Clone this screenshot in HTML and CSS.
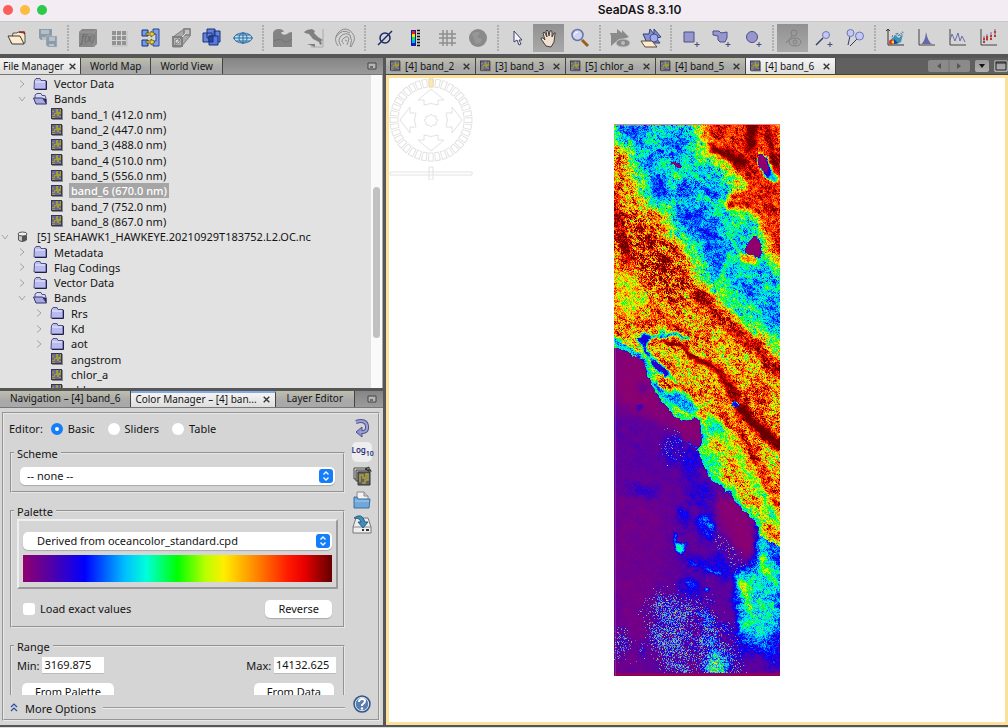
FILE: index.html
```html
<!DOCTYPE html>
<html lang="en">
<head>
<meta charset="utf-8">
<title>SeaDAS 8.3.10</title>
<link rel="stylesheet" href="styles.css">
</head>
<body>
<svg class="defs" width="0" height="0" aria-hidden="true">
  <symbol id="band" viewBox="0 0 12 12">
    <path d="M1 1h11v11H1z" fill="#8a8a84"/><path d="M0 0h11v11H0z" fill="#34345f"/><path d="M1 1h9v9H1z" fill="#6a6a92"/>
    <path d="M5 1h2v3h2V1h1v5H8v2H6V6H4v2H1V7h2V5h2zM1 9h3v1H1zM8 8h2v1H8zM1 3h2v1H1z" fill="#a29f2c"/>
  </symbol>
  <symbol id="folder" viewBox="0 0 14 12">
    <path d="M1.500 2.500L3 .5h4l1 2h5v8.500H1z" fill="#b9bbee" stroke="#515184"/><path d="M2 4h10" stroke="#eeeeff"/><path d="M13.500 3v8.500H2" fill="none" stroke="#20204d"/>
  </symbol>
  <symbol id="open" viewBox="0 0 14 12">
    <path d="M2 5V2l2-1.500h4l1 2h3l1 3v5" fill="#d7d8f4" stroke="#515184"/><path d="M.500 5h9l4 6H3z" fill="#a8abe1" stroke="#34346c"/><path d="M10 5l3.500 1v5z" fill="#24245a"/>
  </symbol>
  <symbol id="right" viewBox="0 0 8 10"><path d="M2 1.500L6 5 2 8.500" fill="none" stroke="#a4a4a4"/></symbol>
  <symbol id="down" viewBox="0 0 8 10"><path d="M1 3l3 4 3-4" fill="none" stroke="#a4a4a4"/></symbol>
  <symbol id="close" viewBox="0 0 8 8"><path d="M1.500 1.500l5 5m0-5l-5 5" stroke="#333" stroke-width="1.200"/></symbol>
  <symbol id="dock" viewBox="0 0 10 8"><path d="M1 1h8v6H1z" fill="#b5b5b5" stroke="#444"/><path d="M3 5h3" stroke="#222"/></symbol>
  <symbol id="step" viewBox="0 0 14 14"><rect width="14" height="14" rx="3" fill="#147dfa"/><path d="M4.500 5.500L7 3l2.500 2.500M4.500 8.500L7 11l2.500-2.500" fill="none" stroke="#fff" stroke-width="1.300"/></symbol>
</svg>

<header class="titlebar">
  <div class="lights"><i class="light red"></i><i class="light amber"></i><i class="light green"></i></div>
  <h1>SeaDAS 8.3.10</h1>
</header>

<div class="toolbar" role="toolbar" aria-label="Tools">
  <button aria-label="Open product"><svg viewBox="0 0 22 22"><path d="M7 6h4l1-1 6 1 1 2v8H5z" fill="#fbe8ca" stroke="#555"/><path d="M13 5h5l1 2" stroke="#8c2525" fill="none" stroke-width="1.500"/><path d="M2 9h12l4 8H6z" fill="#ffecd0" stroke="#3d3d36"/></svg></button>
  <button aria-label="Save all"><svg viewBox="0 0 22 22" fill="#8c9ba8"><path d="M2 2h13v11H4l-2-2z"/><path d="M4 3h8v4H4zM5 10h6v3H5z" fill="#b4bfc7"/><path d="M9 9h11v11H11l-2-2z" stroke="#c4c9cc" stroke-width=".5"/><path d="M12 10h6v4h-6zM12 17h5v2h-5z" fill="#b9c2c9"/></svg></button>
  <span class="sep"></span>
  <button aria-label="Band maths"><svg viewBox="0 0 22 22"><path d="M2 5l3-3h15v15l-3 3H2z" fill="#888"/><path d="M2 5h15v15M17 5l3-3" fill="none" stroke="#9d9d9d"/><text x="4" y="15" font-size="10" font-style="italic" fill="#686868">f(x)</text></svg></button>
  <button aria-label="Filter"><svg viewBox="0 0 22 22"><path d="M4 4h4v4H4zm5 0h4v4H9zm5 0h4v4h-4zM4 9h4v4H4zm5 0h4v4H9zm5 0h4v4h-4zM4 14h4v4H4zm5 0h4v4H9zm5 0h4v4h-4z" fill="#929292"/><path d="M4 19h15V4" fill="none" stroke="#bdbdbd"/></svg></button>
  <button aria-label="Reprojection"><svg viewBox="0 0 22 22"><path d="M14 2h6v17h-6v-5h3V7h-3z" fill="#7f9eea" stroke="#284490"/><path d="M3 3h6v6H3zM3 13h6v6H3z" fill="#719af2" stroke="#172f76"/><path d="M7 6h5V4l4 3-4 3V8H7zM7 14h5v-2l4 3-4 3v-2H7z" fill="#f2d420" stroke="#4e4616" stroke-width=".700"/></svg></button>
  <button aria-label="Subset"><svg viewBox="0 0 22 22" stroke="#808080"><path d="M3 10L14 2h6v7l-9 11H3z" fill="#a8a8a8"/><path d="M14 2h6v6h-6z" fill="#c2c2c2" stroke-width="1.500"/><path d="M3 10h9v9H3z" fill="#b5b5b5" stroke-width="2"/><path d="M12 10l4-4" stroke="#ddd"/><circle cx="7.500" cy="14.500" r="2.500" fill="#ddd"/><path d="M5 18l6-7"/></svg></button>
  <button aria-label="Mosaic"><svg viewBox="0 0 22 22" fill="#6685d9" stroke="#16307e"><path d="M6 2h8v9H6zM13 4h6v11h-6zM2 6h9v9H2z"/><path d="M8 9h9v9H8z" fill="#5a7add"/><path d="M8 9h4v6H8z" fill="#2848a0"/></svg></button>
  <button aria-label="Orthorectification"><svg viewBox="0 0 22 22" fill="none" stroke="#326ba1"><ellipse cx="11" cy="11" rx="9" ry="5" fill="#b5e2f0"/><ellipse cx="11" cy="11" rx="4" ry="5"/><path d="M1 11h20M4 8h14M4 14h14M11 5v12"/></svg></button>
  <span class="sep"></span>
  <button aria-label="Land mask"><svg viewBox="0 0 22 22"><path d="M1 6q1-4 6-4 4 0 5 3-2-1-3 1 2 3 6 1 2-2 5-2v15H1z" fill="#838383"/><path d="M2 14q6-3 9 0t9-2" fill="none" stroke="#747474"/></svg></button>
  <button aria-label="Coastline"><svg viewBox="0 0 22 22"><path d="M20 2v18H8" stroke="#aaa" fill="none"/><path d="M1 5l3-2 5-1 3 2-1 2 4 4 5 3-2 1 1 3-2 1-1-3-6-3-4-5-4-1zM4 17l8 0 0 3z" fill="#808080"/></svg></button>
  <button aria-label="Contours"><svg viewBox="0 0 22 22" fill="none" stroke="#8d8d8d"><path d="M4 19Q-1 12 4 6t11-3q7 5 5 11l-3 6M7 19q-4-6 0-10t9-1q3 5 0 12M10 17q-4-3 0-6t5 1l-2 6M11 13l2 1"/><path d="M2 10Q8 1 16 6"/></svg></button>
  <span class="sep"></span>
  <button aria-label="No data"><svg viewBox="0 0 22 22" fill="none" stroke="#1e2967" stroke-width="1.500"><circle cx="11" cy="11" r="5"/><path d="M4 18L18 4"/></svg></button>
  <button aria-label="Color bar"><svg viewBox="0 0 22 22"><path d="M6 3h5v16H6z" fill="#131f9e"/><path d="M7 4h3v3H7z" fill="#f31b05"/><path d="M7 7h3v3H7z" fill="#ffe100"/><path d="M7 10h3v3H7z" fill="#00ef62"/><path d="M7 13h3v3H7z" fill="#00b7ff"/><path d="M12 3.500h3m-3 3h3m-3 3h3m-3 3h3m-3 3h3m-3 3h3" stroke="#111" stroke-width="1.500"/></svg></button>
  <button aria-label="Grid"><svg viewBox="0 0 22 22" stroke="#8e8e8e" stroke-width="1.500"><path d="M7 3v16M11 3v16M16 3v16M3 7h17M3 11h17M3 16h17"/></svg></button>
  <button aria-label="Globe"><svg viewBox="0 0 22 22"><circle cx="11" cy="11" r="9" fill="#8a8a8a"/><path d="M5 7q4-4 8-1l-3 4 5 2q-1 5-6 5" fill="#979797"/></svg></button>
  <span class="sep"></span>
  <button aria-label="Select"><svg viewBox="0 0 22 22"><path d="M7 4v11l3-2 2 5 2-1-2-4h3z" fill="#f4f4ff" stroke="#40406a"/></svg></button>
  <button class="on" aria-label="Pan" aria-pressed="true"><svg viewBox="0 0 22 22"><path d="M8 19l-5-7q0-2 2-1l2 2-2-7q1-2 2 0l2 4-1-6q1-2 2 0l1 5 1-5q2-1 2 1v5l2-4q2-1 1 1l-1 8-3 5z" fill="#f1dfcf" stroke="#45403c"/></svg></button>
  <button aria-label="Zoom"><svg viewBox="0 0 22 22"><path d="M13 13l6 6" stroke="#94621c" stroke-width="3"/><circle cx="8.500" cy="8" r="5.500" fill="#cdd5f1" stroke="#6773a7" stroke-width="1.500"/><path d="M5 8q1-3 4-3" stroke="#fff" fill="none"/></svg></button>
  <span class="sep"></span>
  <button aria-label="Show shapes"><svg viewBox="0 0 22 22" fill="#8a8a8a"><path d="M1 6h7V2l5 4V3l7 7-6 2-5 1-7 6V9z"/><ellipse cx="14" cy="16" rx="7" ry="4" stroke="#c4c4c4"/><circle cx="14" cy="16" r="2" fill="#bbb"/></svg></button>
  <button aria-label="Import shapes"><svg viewBox="0 0 22 22"><path d="M3 7h6l1-5 4 5V2l7 8-5 1 4 5H7z" fill="#8390d4" stroke="#344074"/><circle cx="14" cy="11" r="4" fill="#a2ade8" stroke="#445199"/><path d="M1 14h11l5 6H5z" fill="#ffe9cb" stroke="#564d3c"/></svg></button>
  <span class="sep"></span>
  <button aria-label="Rectangle"><svg viewBox="0 0 22 22"><path d="M4 5h10v10H4z" fill="#9897cd" stroke="#4f4f88"/><path d="M17 15v5m-2.500-2.500h5" stroke="#444b79"/></svg></button>
  <button aria-label="Polygon"><svg viewBox="0 0 22 22"><path d="M2 4h6l2 2 6-1v6l-2 4H9l-2-2V9L2 8z" fill="#9897cd" stroke="#4f4f88"/><path d="M17 15v5m-2.500-2.500h5" stroke="#444b79"/></svg></button>
  <button aria-label="Ellipse"><svg viewBox="0 0 22 22"><circle cx="10" cy="10" r="5.500" fill="#9897cd" stroke="#4f4f88"/><path d="M17 15v5m-2.500-2.500h5" stroke="#444b79"/></svg></button>
  <span class="sep"></span>
  <button class="on" aria-label="Pin overlay" aria-pressed="true"><svg viewBox="0 0 22 22" fill="none" stroke="#808080"><circle cx="12" cy="6" r="3"/><path d="M10 9L4 16"/><ellipse cx="13" cy="15" rx="6" ry="4"/><circle cx="13" cy="15" r="2"/></svg></button>
  <button aria-label="Pin"><svg viewBox="0 0 22 22"><path d="M10 11l-7 7" stroke="#333c68" stroke-width="1.500"/><circle cx="13" cy="8" r="3.500" fill="#c2c7f6" stroke="#7077ae"/><path d="M17 15v5m-2.500-2.500h5" stroke="#444b79"/></svg></button>
  <button aria-label="GCP"><svg viewBox="0 0 22 22"><path d="M6 9l-2 9M13 12l-7 7" stroke="#333c68"/><circle cx="6.500" cy="6" r="3.500" fill="#c2c7f6" stroke="#7077ae"/><circle cx="15.500" cy="9" r="4" fill="#c2c7f6" stroke="#7077ae"/></svg></button>
  <span class="sep"></span>
  <button aria-label="Scatter density"><svg viewBox="0 0 22 22"><path d="M4 2v16h16M2 4l2-2 2 2" fill="none" stroke="#333"/><path d="M5 17l3-6 4-2 3 2 4-4-2 8-4 2z" fill="#3b92b4"/><path d="M8 9l3 1 2-4 2 3 4-4" stroke="#4d7da9" stroke-dasharray="1 1" fill="none" stroke-width="2"/><circle cx="7.500" cy="15" r="2.500" fill="#dc3224"/><circle cx="9" cy="15" r="1.500" fill="#ffd629"/><path d="M10 12l4 4-4 1z" fill="#183e9a"/></svg></button>
  <button aria-label="Histogram"><svg viewBox="0 0 22 22"><path d="M4 2v16h16" fill="none" stroke="#444"/><path d="M6 17q4-2 5-12q2 10 6 12z" fill="#6568a6"/></svg></button>
  <button aria-label="Profile plot"><svg viewBox="0 0 22 22" fill="none"><path d="M4 2v16h16" stroke="#444"/><path d="M4 13l2-6 3 7 3-8 2 8 2-5 3 6" stroke="#696eab"/></svg></button>
  <button aria-label="Scatter plot"><svg viewBox="0 0 22 22" fill="none"><path d="M4 2v16h16" stroke="#444"/><path d="M7 9v7m3-9v7m4-9v8m4-11v7" stroke="#76649a"/><path d="M6 12h2m1-2h2m2-1h2m2-4h2M6 15h2m1-3h2m2 0h2m2-3h2" stroke="#c5352f" stroke-width="2"/></svg></button>
</div>

<div class="workspace">
  <aside class="side">
    <section class="files" aria-label="File Manager">
      <nav class="tabs">
        <button class="tab active">File Manager <svg class="x"><use href="#close"/></svg></button>
        <button class="tab">World Map</button><button class="tab">World View</button>
        <svg class="dock"><use href="#dock"/></svg>
      </nav>
      <div class="treeview">
        <ul class="tree">
          <li class="l1"><svg class="arrow"><use href="#right"/></svg><svg class="ico"><use href="#folder"/></svg><span>Vector Data</span></li>
          <li class="l1"><svg class="arrow"><use href="#down"/></svg><svg class="ico"><use href="#open"/></svg><span>Bands</span></li>
          <li class="l2"><i class="arrow"></i><svg class="ico"><use href="#band"/></svg><span>band_1 (412.0 nm)</span></li>
          <li class="l2"><i class="arrow"></i><svg class="ico"><use href="#band"/></svg><span>band_2 (447.0 nm)</span></li>
          <li class="l2"><i class="arrow"></i><svg class="ico"><use href="#band"/></svg><span>band_3 (488.0 nm)</span></li>
          <li class="l2"><i class="arrow"></i><svg class="ico"><use href="#band"/></svg><span>band_4 (510.0 nm)</span></li>
          <li class="l2"><i class="arrow"></i><svg class="ico"><use href="#band"/></svg><span>band_5 (556.0 nm)</span></li>
          <li class="l2"><i class="arrow"></i><svg class="ico"><use href="#band"/></svg><span class="selected">band_6 (670.0 nm)</span></li>
          <li class="l2"><i class="arrow"></i><svg class="ico"><use href="#band"/></svg><span>band_7 (752.0 nm)</span></li>
          <li class="l2"><i class="arrow"></i><svg class="ico"><use href="#band"/></svg><span>band_8 (867.0 nm)</span></li>
          <li><svg class="arrow"><use href="#down"/></svg><svg class="ico" viewBox="0 0 14 12"><path d="M2 3v6q4 4 9 0V3" fill="#555"/><path d="M3 4v5l3 1V4" fill="#c8c8c8"/><ellipse cx="6.500" cy="3" rx="4.500" ry="2" fill="#eee" stroke="#555"/></svg><span>[5] SEAHAWK1_HAWKEYE.20210929T183752.L2.OC.nc</span></li>
          <li class="l1"><svg class="arrow"><use href="#right"/></svg><svg class="ico"><use href="#folder"/></svg><span>Metadata</span></li>
          <li class="l1"><svg class="arrow"><use href="#right"/></svg><svg class="ico"><use href="#folder"/></svg><span>Flag Codings</span></li>
          <li class="l1"><svg class="arrow"><use href="#right"/></svg><svg class="ico"><use href="#folder"/></svg><span>Vector Data</span></li>
          <li class="l1"><svg class="arrow"><use href="#down"/></svg><svg class="ico"><use href="#open"/></svg><span>Bands</span></li>
          <li class="l2"><svg class="arrow"><use href="#right"/></svg><svg class="ico"><use href="#folder"/></svg><span>Rrs</span></li>
          <li class="l2"><svg class="arrow"><use href="#right"/></svg><svg class="ico"><use href="#folder"/></svg><span>Kd</span></li>
          <li class="l2"><svg class="arrow"><use href="#right"/></svg><svg class="ico"><use href="#folder"/></svg><span>aot</span></li>
          <li class="l2"><i class="arrow"></i><svg class="ico"><use href="#band"/></svg><span>angstrom</span></li>
          <li class="l2"><i class="arrow"></i><svg class="ico"><use href="#band"/></svg><span>chlor_a</span></li>
          <li class="l2"><i class="arrow"></i><svg class="ico"><use href="#band"/></svg><span>chl_ocx</span></li>
        </ul>
        <div class="scroll"><i></i></div>
      </div>
    </section>

    <section class="manager" aria-label="Color Manager">
      <nav class="tabs">
        <button class="tab wide">Navigation – [4] band_6</button>
        <button class="tab active blue">Color Manager – [4] ban... <svg class="x"><use href="#close"/></svg></button>
        <button class="tab">Layer Editor</button>
        <svg class="dock"><use href="#dock"/></svg>
      </nav>
      <form class="panel">
        <div class="fields">
          <div class="editor"><span>Editor:</span>
            <label><input type="radio" name="editor" checked>Basic</label>
            <label><input type="radio" name="editor">Sliders</label>
            <label><input type="radio" name="editor">Table</label>
          </div>
          <div class="groups">
            <fieldset class="scheme"><legend>Scheme</legend>
              <div class="pick"><select aria-label="Scheme"><option>-- none --</option></select><svg><use href="#step"/></svg></div>
            </fieldset>
            <fieldset class="palette"><legend>Palette</legend>
              <div class="raised">
                <div class="pick indent"><select aria-label="Palette"><option>Derived from oceancolor_standard.cpd</option></select><svg><use href="#step"/></svg></div>
                <div class="ramp"></div>
              </div>
              <div class="row"><label class="check"><input type="checkbox">Load exact values</label><button type="button" class="push">Reverse</button></div>
            </fieldset>
            <fieldset class="range"><legend>Range</legend>
              <div class="row"><label>Min: <input class="num" value="3169.875"></label><label>Max: <input class="num" value="14132.625"></label></div>
              <div class="row buttons"><button type="button" class="push long">From Palette</button><button type="button" class="push">From Data</button></div>
            </fieldset>
          </div>
          <div class="more"><svg viewBox="0 0 8 10"><path d="M1 4l3-3 3 3M1 8l3-3 3 3" fill="none" stroke="#2d4ca0" stroke-width="1.200"/></svg><span>More Options</span><i></i></div>
        </div>
        <div class="actions">
          <button type="button" aria-label="Reset"><svg viewBox="0 0 20 20"><path d="M4 4q10-3 11 4t-7 6" fill="none" stroke="#505288" stroke-width="4"/><path d="M4 14l6-5v10z" fill="#8e91d0" stroke="#505288"/><path d="M4 4q10-3 11 4t-7 6" fill="none" stroke="#9da0da" stroke-width="2"/></svg></button>
          <button type="button" class="log">Log<sub>10</sub></button>
          <button type="button" aria-label="Apply to other bands"><svg viewBox="0 0 20 20"><path d="M2 2h13v11H2z" fill="#ddd" stroke="#444"/><path d="M4 4h13v11H4z" fill="#aaa" stroke="#444"/><path d="M6 6h12v13H6z" fill="#626065" stroke="#333"/><path d="M8 16V9h3v3h3V8h2v6h-3v3h-3" fill="none" stroke="#aaa23c" stroke-width="1.500"/><path d="M13 3l4-2v4zM17 3q2 0 2 3" fill="none" stroke="#222"/></svg></button>
          <button type="button" aria-label="Import palette"><svg viewBox="0 0 20 20"><path d="M5 10V2h7l4 4v7" fill="#f2f2f2" stroke="#888"/><path d="M12 2v4h4" fill="#ccc" stroke="#888"/><path d="M2 7h3l1 2h12l-1 9H2z" fill="#70a8d9" stroke="#3c6f9e"/><path d="M3 11h14" stroke="#a8cff0"/></svg></button>
          <button type="button" aria-label="Export palette"><svg viewBox="0 0 20 20"><path d="M4 4h12l3 9v6H1v-6z" fill="#eee" stroke="#777"/><path d="M1 13h18" stroke="#888"/><path d="M10 16h2m2 0h3" stroke="#333" stroke-width="2"/><path d="M2 4q8-6 11 4h3l-5 6-5-6h3Q8 4 2 4z" fill="#438bb8" stroke="#246187"/></svg></button>
          <button type="button" class="help" aria-label="Help"><svg viewBox="0 0 20 20"><circle cx="10" cy="10" r="8" fill="#597daf" stroke="#365682" stroke-width="1.500"/><circle cx="10" cy="10" r="6.700" fill="none" stroke="#d9e5f3"/><path d="M7 8q0-3 3-3t3 2q0 2-3 4v1" fill="none" stroke="#fff" stroke-width="2"/><circle cx="10" cy="14.500" r="1.200" fill="#fff"/></svg></button>
        </div>
      </form>
    </section>
  </aside>

  <main class="docs">
    <nav class="tabs">
      <button class="tab doc"><svg class="ico"><use href="#band"/></svg>[4] band_2 <svg class="x"><use href="#close"/></svg></button>
      <button class="tab doc"><svg class="ico"><use href="#band"/></svg>[3] band_3 <svg class="x"><use href="#close"/></svg></button>
      <button class="tab doc"><svg class="ico"><use href="#band"/></svg>[5] chlor_a <svg class="x"><use href="#close"/></svg></button>
      <button class="tab doc"><svg class="ico"><use href="#band"/></svg>[4] band_5 <svg class="x"><use href="#close"/></svg></button>
      <button class="tab doc active"><svg class="ico"><use href="#band"/></svg>[4] band_6 <svg class="x"><use href="#close"/></svg></button>
      <div class="nav">
        <button class="pair" aria-label="Scroll tabs"><svg viewBox="0 0 42 12"><path d="M13 3v6L9 6zM29 3v6l4-3z" fill="#555"/><path d="M21 0v12" stroke="#727272"/></svg></button>
        <button aria-label="List documents"><svg viewBox="0 0 14 12"><path d="M4 4h6L7 8z" fill="#111"/></svg></button>
        <button aria-label="Maximize"><svg viewBox="0 0 14 12"><path d="M2 2h10v8H2zM2 3h10" fill="none" stroke="#222"/></svg></button>
      </div>
    </nav>
    <div class="view">
      <svg class="compass" viewBox="0 0 86 102" fill="none" stroke="#e2e2e2">
        <g transform="rotate(-4 42 42)"><circle cx="42" cy="42" r="37" stroke-width="9" pathLength="360" stroke-dasharray="8.400 1.600"/><circle cx="42" cy="42" r="37" stroke="#fff" stroke-width="7" pathLength="360" stroke-dasharray="5.400 4.600" stroke-dashoffset="-1.500"/></g>
        <path d="M40 1h4v8h-4z" fill="#fbe8b4" stroke="#eedca8"/>
        <path d="M42 11l13 11h-6v5q-7-3-14 0v-5h-6zM42 73l13-11h-6v-5q-7 3-14 0v5h-6zM11 42l10-13v6h6q-3 7 0 14h-6v6zM73 42L63 29v6h-6q3 7 0 14h6v6z"/>
        <path d="M42 36l2 2 3 0 0 3 2 1-2 2v3h-3l-2 2-2-2h-3v-3l-2-2 2-1v-3h3z"/>
        <path d="M1 94h82v3H1zM40 89h4v13h-4z" fill="#fff"/>
      </svg>
      <canvas class="scene" id="scene" width="166" height="552" role="img" aria-label="Band 6 radiance"></canvas>
    </div>
  </main>
</div>
<script src="scene.js"></script>
</body>
</html>
```
FILE: styles.css
```css
* { box-sizing: border-box; }
html, body { height: 100%; }
body { margin: 0; display: flex; flex-direction: column; background: #d5d5d5; color: #141414; font: 11px/15px "Noto Sans", "Open Sans", sans-serif; overflow: hidden; }
button, input, select { font: inherit; color: inherit; margin: 0; }
button { border: 0; padding: 0; background: none; }
svg { display: block; flex: none; }
.defs { position: absolute; }

.titlebar { display: grid; grid-template-columns: 1fr auto 1fr; align-items: center; height: 21px; flex: none; background: #f3edf3; padding: 0 2px 2px 3px; }
.titlebar h1 { margin: 0; grid-column: 2; padding-left: 270px; font: 600 12px/18px Inter, "Open Sans", sans-serif; }
.lights { display: flex; gap: 7px; }
.light { width: 10px; height: 10px; border-radius: 50%; }
.red { background: #fc5f5b; }
.amber { background: #fcbc40; }
.green { background: #2bca48; }

.toolbar { display: flex; align-items: center; height: 33px; flex: none; padding-left: 1px; border-top: 1px solid #c8c8c8; background: #d5d5d5; }
.toolbar button { flex: none; width: 31px; height: 28px; display: grid; place-items: center; }
.toolbar svg { width: 22px; height: 22px; }
.toolbar .on { background: linear-gradient(#919191, #a9a9a9); }
.sep { flex: none; width: 9px; height: 26px; background: radial-gradient(circle, #888 0 1px, transparent 1px) center / 2px 3px repeat-y; }

.workspace { flex: 1; min-height: 0; display: flex; gap: 3px; padding: 4px 0 2px; background: #565656; border-bottom: 1px solid #ddd; }
.side { width: 38%; flex: none; display: flex; flex-direction: column; gap: 3px; }
.files { flex: 330; min-height: 0; display: flex; flex-direction: column; }
.manager { flex: 335; min-height: 0; display: flex; flex-direction: column; background: #d5d5d5; }
.tabs { display: flex; flex: none; height: 17px; background: linear-gradient(#858585, #9b9b9b); border-bottom: 1px solid #777; }
.tab { display: flex; align-items: center; gap: 5px; padding: 0 11px; white-space: nowrap; background: linear-gradient(#bebfae, #a9a9a9 60%); border-right: 1px solid #444; font-size: 10px; }
.files .tab { padding: 0 9px; }
.tab.active { background: linear-gradient(#f4f4f4, #dedede); padding: 0 4px; }
.files .tab.active { padding: 0 3px; gap: 4px; }
.tab.blue { border-top: 2px solid #84aadf; }
.manager .tab.wide { padding: 0 10px; }
.x { width: 9px; height: 9px; }
.dock { width: 10px; height: 8px; margin: 4px 6px 0 auto; }

.treeview { flex: 1; min-height: 0; display: flex; overflow: hidden; background: #e2e2e2; }
.tree { flex: 1; list-style: none; margin: 0; padding: 1px 0 0; height: calc(100% + 10px); display: grid; grid-auto-rows: 1fr; }
.tree li { display: flex; align-items: center; }
.tree .l1 { padding-left: 17px; }
.tree .l2 { padding-left: 34px; }
.arrow { width: 8px; height: 10px; margin: 0 7px 0 1px; }
.tree .ico { width: 14px; height: 12px; margin-right: 5px; }
.tree span { padding: 0 2px; white-space: nowrap; }
.tree .selected { background: #a5a5a5; color: #fff; font-weight: 500; }
.scroll { width: 12px; background: #fafafa; border-right: 1px solid #aaa; padding: 112px 2px 50px; }
.scroll i { display: block; height: 100%; background: #c1c1c1; border-radius: 4px; }

.panel { flex: 1; min-height: 0; display: flex; margin: 4px 3px 4px 2px; border: 2px groove #e8e8e8; }
.fields { flex: 1; min-width: 0; display: flex; flex-direction: column; padding: 6px 0 3px 5px; }
.editor { display: flex; align-items: center; gap: 13px; height: 18px; flex: none; margin-bottom: 8px; }
.editor span { margin-right: -5px; }
.editor label, .check { display: flex; align-items: center; gap: 5px; }
.editor input { appearance: none; width: 12px; height: 12px; border-radius: 50%; background: #fff; }
.editor input:checked { border: 4px solid #147dfa; }
.groups { flex: 1; min-height: 0; overflow: hidden; padding: 0 0 0 1px; }
fieldset { margin: 0 0 11px; padding: 0 8px; border: 2px groove #e6e6e6; min-width: 0; }
legend { padding: 0 3px; margin-left: -6px; }
.scheme { padding: 6px 8px; }
.palette { padding: 0 5px 8px; }
.palette legend, .range legend { margin-left: -3px; }
.range { padding: 3px 7px 3px 5px; }
.range .buttons { margin-top: 10px; padding-right: 2px; }
.pick { display: grid; }
.pick > * { grid-area: 1 / 1; }
.pick select { appearance: none; width: 100%; height: 18px; border: 0; border-radius: 5px; background: #fff; padding: 0 7px; box-shadow: 0 1px 1px #aaa; }
.pick.indent select { padding-left: 14px; }
.pick svg { width: 14px; height: 14px; justify-self: end; align-self: center; margin-right: 2px; pointer-events: none; }
.raised { padding: 11px 4px 5px; border: 2px outset #eee; }
.ramp { height: 27px; margin-top: 5px; background: linear-gradient(90deg, #900070, #5a00a0 8%, #0000ff 20%, #00bfff 33%, #00ffd9 40%, #00ff00 50%, #b8ff00 59%, #ffee00 65%, #ff8000 76%, #ff1800 86%, #e80000 91%, #700000 99%); }
.row { display: flex; justify-content: space-between; align-items: center; }
.palette > .row { padding: 11px 6px 0; }
.check input { appearance: none; width: 12px; height: 12px; background: #fff; border-radius: 3px; }
.push { height: 18px; padding: 0 13px; background: #fff; border-radius: 5px; box-shadow: 0 1px 1px #aaa; }
.push.long { margin-left: 5px; }
.num { height: 16px; width: 62px; padding: 0 2px; border: 0; background: #fff; box-shadow: 0 1px #bbb; }
.more { flex: none; display: flex; align-items: center; gap: 7px; height: 16px; margin-top: 5px; }
.more svg { width: 8px; height: 10px; margin-left: 1px; }
.more i { flex: 1; border-top: 2px groove #eee; }
.actions { flex: none; width: 33px; display: flex; flex-direction: column; align-items: center; gap: 4px; padding: 4px 0 5px; }
.actions svg { width: 20px; height: 20px; }
.actions .log { width: 20px; height: 20px; background: #eee; border-radius: 5px; color: #2b2e78; font-size: 8px; line-height: 14px; font-weight: 600; white-space: nowrap; }
.log sub { font-size: 7px; }
.actions .help { margin-top: auto; }

.docs { flex: 1; min-width: 0; display: flex; flex-direction: column; }
.docs .tabs { background: #606060; border-color: #444; }
.tab.doc, .tab.doc.active { width: 90px; gap: 4px; padding: 0 4px; }
.doc .ico { width: 11px; height: 12px; }
.doc .x { margin-left: auto; }
.nav { margin-left: auto; display: flex; align-items: center; gap: 5px; }
.nav button { height: 12px; background: linear-gradient(#999, #b0b0b0); border-radius: 2px; }
.nav svg { width: 14px; height: 12px; }
.nav .pair svg { width: 42px; }
.nav .pair { background: #8a8a8a; }
.view { position: relative; flex: 1; min-height: 0; display: grid; place-items: center; background: #fff; border: 3px solid #fbe09a; overflow: hidden; }
.compass { position: absolute; left: 0; top: 0; width: 86px; height: 102px; }
.scene { display: block; }
```
FILE: scene.js
```js
// Red channel holds the normalised radiance, green the local noise, blue the glint density.
const W = 166, H = 552;
const field = document.createElement('canvas');
field.width = W; field.height = H;
const f = field.getContext('2d', { willReadFrequently: true });

function ink(v, n, g, blur) {
  f.fillStyle = f.strokeStyle = `rgb(${Math.round(v * 255)},${Math.round(n * 255)},${Math.round((g || 0) * 255)})`;
  f.filter = blur ? `blur(${blur}px)` : 'none';
}
function poly(v, n, blur, pts, g) {
  ink(v, n, g, blur); f.beginPath();
  for (let i = 0; i < pts.length; i += 2) f.lineTo(pts[i], pts[i + 1]);
  f.closePath(); f.fill();
}
function line(v, n, blur, w, pts, g) {
  ink(v, n, g, blur); f.lineWidth = w; f.lineCap = f.lineJoin = 'round'; f.beginPath();
  for (let i = 0; i < pts.length; i += 2) f.lineTo(pts[i], pts[i + 1]);
  f.stroke();
}
function blob(v, n, blur, x, y, rx, ry, a, g) {
  ink(v, n, g, blur); f.beginPath(); f.ellipse(x, y, rx, ry, (a || 0) * Math.PI / 180, 0, 7); f.fill();
}

// Land
poly(.74, .25, 0, [0, 0, W, 0, W, H, 0, H]);
poly(.87, .14, 5, [82, -9, 175, -9, 175, 145, 150, 125, 140, 95, 115, 80, 125, 60, 92, 30]);
poly(.87, .3, 6, [0, 62, 10, 85, 38, 102, 58, 125, 80, 158, 86, 182, 45, 176, 26, 150, 4, 130]);
line(.98, .1, 3, 9, [-2, 70, 8, 112, 16, 140]);
blob(.97, .12, 4, 88, 174, 12, 7, 20);
poly(.66, .17, 3, [0, 140, 20, 152, 33, 185, 0, 196]);
poly(.52, .24, 4, [0, -6, 86, -6, 92, 28, 134, 60, 116, 82, 142, 92, 155, 120, 170, 150, 170, 238, 142, 212, 116, 186, 85, 160, 70, 125, 50, 92, 26, 74, 12, 30, 0, 15]);
poly(.37, .16, 4, [0, -6, 74, -6, 84, 32, 112, 58, 112, 82, 140, 96, 148, 130, 170, 160, 170, 218, 128, 190, 98, 152, 66, 108, 57, 86, 40, 74, 28, 40, 12, 14, 0, 6]);
[[44, 64, 11, 16, -8], [34, 38, 7, 9, 0], [80, 94, 16, 11, 35], [95, 112, 10, 16, -20], [107, 138, 9, 15, -10], [72, 69, 9, 4, -20], [18, 6, 14, 7, 0], [62, 20, 10, 8, 0], [100, 68, 9, 5, 30], [130, 165, 9, 9, 0], [160, 190, 5, 14, 0]].forEach(b => blob(.24, .1, 4, ...b));
line(.5, .16, 2, 3, [68, 40, 60, 66, 54, 90]);
line(.58, .14, 2, 3, [122, 120, 112, 144, 104, 160]);
blob(.48, .18, 4, 98, 26, 12, 8, 40);
blob(.46, .18, 4, 126, 98, 13, 8, 30);
blob(.46, .16, 5, 120, 172, 12, 10, 30);
line(1, .03, 2, 10, [98, 24, 112, 31, 128, 39]);
line(1, .03, 2, 12, [139, 2, 136, 22]);
line(.99, .05, 2, 5, [154, 2, 158, 30, 166, 50]);
blob(.9, .14, 2, 119, 78, 7, 9, 30);
blob(.8, .15, 2, 135, 135, 9, 4, 20);
line(.3, .05, 1, 5, [151, 48, 162, 56]);
blob(.13, .03, 1, 151, 41, 6, 11, -18);
blob(0, 0, 0, 149, 39, 5, 9, -18);
poly(0, 0, 0, [135, 116, 141, 111, 147, 117, 148, 129, 140, 135, 132, 127, 134, 121]);
line(.02, .02, 0, 4, [59, 38, 65, 42]);

// Ridges
line(.94, .17, 4, 6, [40, 178, 48, 192, 68, 208]);
line(.95, .17, 4, 9, [88, 174, 104, 192, 117, 206]);
line(.97, .12, 3, 9, [117, 206, 141, 222, 157, 240, 170, 250]);
line(1, .04, 1, 4, [48, 215, 67, 221, 84, 235, 98, 242]);
line(.99, .05, 2, 8, [80, 233, 104, 247, 116, 262, 127, 284]);
line(1, .04, 2, 12, [127, 285, 144, 303, 161, 318, 170, 322]);
line(.93, .17, 4, 9, [112, 290, 134, 322, 154, 362, 162, 385]);
blob(.86, .22, 5, 143, 273, 18, 12, 35);
line(.5, .17, 3, 10, [96, 296, 116, 320, 140, 360, 166, 400]);

// Coastal fringe and bay
const coast = [-5, 221, 11, 228, 29, 235, 32, 252, 44, 270, 54, 287, 67, 298, 81, 295, 87, 303, 89, 318, 82, 325, 89, 345, 109, 365, 114, 367, 127, 385, 141, 397, 144, 408];
line(.54, .22, 3, 13, coast);
line(.38, .12, 2, 6, coast);
blob(.32, .12, 2, 66, 278, 21, 8, 24);
blob(.44, .14, 3, 97, 338, 9, 19, -24);
blob(.46, .14, 3, 97, 307, 9, 6, 20);
line(.3, .12, 1, 4, [-2, 215, 14, 225, 26, 231]);
blob(.16, .05, 1, 31, 215, 6, 5, 0);
line(.2, .09, 1, 3, [36, 214, 46, 213, 54, 210, 74, 213]);
line(.16, .06, 1, 4, [31, 217, 29, 225, 35, 232]);
line(.12, .04, 1, 7, [38, 237, 46, 244, 53, 251]);
line(.36, .1, 1, 3, [54, 252, 66, 257]);
line(.22, .08, 1, 4, [40, 259, 49, 267]);
blob(.2, .08, 0, 123, 281, 3, 3, 0);

// Ocean
const sea = [...coast, 150, 416, 170, 425, 170, 560, -5, 560];
poly(.08, .02, 0, sea);
f.save();
f.beginPath();
for (let i = 0; i < sea.length; i += 2) f.lineTo(sea[i], sea[i + 1]);
f.clip();
poly(.01, .008, 6, [-5, 215, 30, 230, 54, 290, 90, 290, 92, 335, 60, 306, 0, 278]);
poly(.01, .008, 5, [98, 360, 132, 385, 144, 410, 140, 430, 126, 432, 108, 400]);
poly(.05, .02, 8, [-5, 365, 50, 380, 45, 450, 20, 552, -5, 552]);
[[28, 366, 20, 4, 8], [88, 370, 14, 12, 0], [76, 340, 9, 20, 0], [70, 395, 5, 14, -20], [93, 404, 9, 18, 0], [78, 438, 15, 7, 35], [96, 443, 16, 8, 30], [75, 465, 13, 12, 0], [110, 442, 8, 18, -20], [28, 264, 3, 4, 0], [60, 330, 9, 14, 0], [100, 522, 38, 22, 0], [112, 370, 5, 3, 0]].forEach(b => blob(.16, .07, 4, ...b));
line(.2, .05, 1, 2, [24, 285, 29, 283]);
line(.33, .14, 3, 5, [87, 395, 95, 399, 97, 413]);
line(.3, .1, 2, 2, [66, 387, 73, 394]);
line(.3, .09, 1, 3, [63, 409, 62, 423, 68, 426, 72, 421]);
blob(.43, .06, 1, 66, 424, 5, 5);
line(.32, .1, 1, 3, [77, 436, 82, 441]);
line(.3, .1, 1, 3, [92, 445, 105, 451]);
line(.32, .1, 2, 3, [70, 456, 80, 462]);
blob(.38, .1, 1, 93, 466, 2, 3);
line(.28, .08, 0, 1, [64, 315, 83, 323]);
blob(.14, .05, 4, 56, 323, 7, 14, 15, .3);
blob(.14, .05, 2, 66, 330, 4, 6, 0, .3);
line(.1, .06, 3, 7, [103, 412, 116, 425, 128, 450], .3);

poly(.1, .07, 6, [34, 480, 48, 466, 85, 485, 112, 500, 126, 545, 120, 560, 62, 560, 40, 520], .55);
blob(.12, .07, 4, 60, 505, 20, 32, 0, .68);
line(.22, .18, 5, 14, [90, 486, 98, 516, 104, 545], .7);
blob(.5, .28, 4, 104, 542, 9, 12, 0, .5);
blob(.1, .05, 4, 8, 520, 8, 14, 0, .35);
blob(.09, .04, 3, 28, 525, 5, 12, 0, .08);

poly(.24, .13, 4, [124, 448, 142, 434, 144, 400, 170, 418, 170, 514, 158, 526, 140, 534, 126, 512, 120, 478]);
poly(.38, .14, 4, [123, 450, 142, 444, 146, 404, 157, 428, 166, 452, 164, 496, 150, 522, 134, 512, 126, 485], .06);
line(.55, .14, 3, 9, [126, 456, 136, 472, 142, 490], .1);
line(.7, .14, 2, 4, [127, 460, 134, 474, 138, 488], .2);
line(.6, .12, 2, 6, [148, 432, 151, 446, 162, 460]);
blob(.5, .14, 3, 130, 500, 6, 7);
blob(.4, .14, 3, 146, 486, 9, 22, 0, .2);
line(.33, .08, 2, 3, [145, 404, 156, 418, 166, 428]);
blob(.2, .1, 4, 160, 532, 7, 13);
f.restore();

// Noise and colour lookup
let seed = 8310;
const rnd = () => ((seed = (seed * 1664525 + 1013904223) >>> 0) / 4294967296);
function lattice(sx, sy) {
  const cols = 240, a = Float32Array.from({ length: cols * 500 }, () => rnd() * 2 - 1);
  return (x, y) => {
    // Grain follows the north-west to south-east mountain trend.
    const u = (x * .8 + y * .6) / sx + 5, w = (y * .8 - x * .6 + 140) / sy + 5;
    const i = u | 0, j = w | 0, p = u - i, q = w - j, k = j * cols + i;
    return (a[k] * (1 - p) + a[k + 1] * p) * (1 - q) + (a[k + cols] * (1 - p) + a[k + cols + 1] * p) * q;
  };
}
const coarse = lattice(10, 6), fine = lattice(3, 2);
const bendX = lattice(7, 7), bendY = lattice(7, 7), crinkleX = lattice(3, 3), crinkleY = lattice(3, 3);
const clamp = (v, max) => Math.max(0, Math.min(max, Math.round(v)));
const stops = [[0, 144, 0, 108], [.08, 92, 0, 158], [.14, 42, 0, 205], [.2, 0, 0, 255], [.33, 0, 180, 255], [.4, 0, 250, 225], [.5, 0, 255, 20], [.59, 180, 255, 0], [.65, 255, 238, 0], [.76, 255, 128, 0], [.86, 255, 28, 0], [.91, 225, 0, 0], [.98, 115, 0, 0], [1, 104, 0, 0]];
function colour(v) {
  v = Math.max(0, Math.min(1, v));
  let i = 1;
  while (stops[i][0] < v) i++;
  const a = stops[i - 1], b = stops[i], t = (v - a[0]) / (b[0] - a[0]);
  return [1, 2, 3].map(c => a[c] + (b[c] - a[c]) * t);
}
const src = f.getImageData(0, 0, W, H).data;
const img = f.createImageData(W, H), d = img.data;
for (let y = 0; y < H; y++) for (let x = 0; x < W; x++) {
  const o = (y * W + x) * 4;
  const sx = clamp(x + bendX(x, y) * 2 + crinkleX(x, y) * 1.5, W - 1);
  const sy = clamp(y + bendY(x, y) * 2 + crinkleY(x, y) * 1.5, H - 1);
  const s = (sy * W + sx) * 4, n = src[s + 1] / 255;
  const grain = coarse(x, y) * .5 + fine(x, y) * .7 + (rnd() + rnd() - 1) * .95;
  let c = colour(src[s] / 255 + grain * n);
  if (rnd() < src[s + 2] / 255 * (.7 + coarse(x, y) * .6)) {
    const t = colour(.2 + rnd() * rnd() * .65), m = .5 + rnd() * .45;
    c = c.map((p, i) => p * (1 - m) + (t[i] * .6 + 85) * m);
  }
  if (y > 548) c = [144, 0, 88];
  if (y === 0) c = [250, 120, 120];
  if (x === 1 && y > 223) c = c.map(p => p * .8 + 40);
  d[o] = c[0]; d[o + 1] = c[1]; d[o + 2] = c[2]; d[o + 3] = 255;
}
document.getElementById('scene').getContext('2d').putImageData(img, 0, 0);
```
